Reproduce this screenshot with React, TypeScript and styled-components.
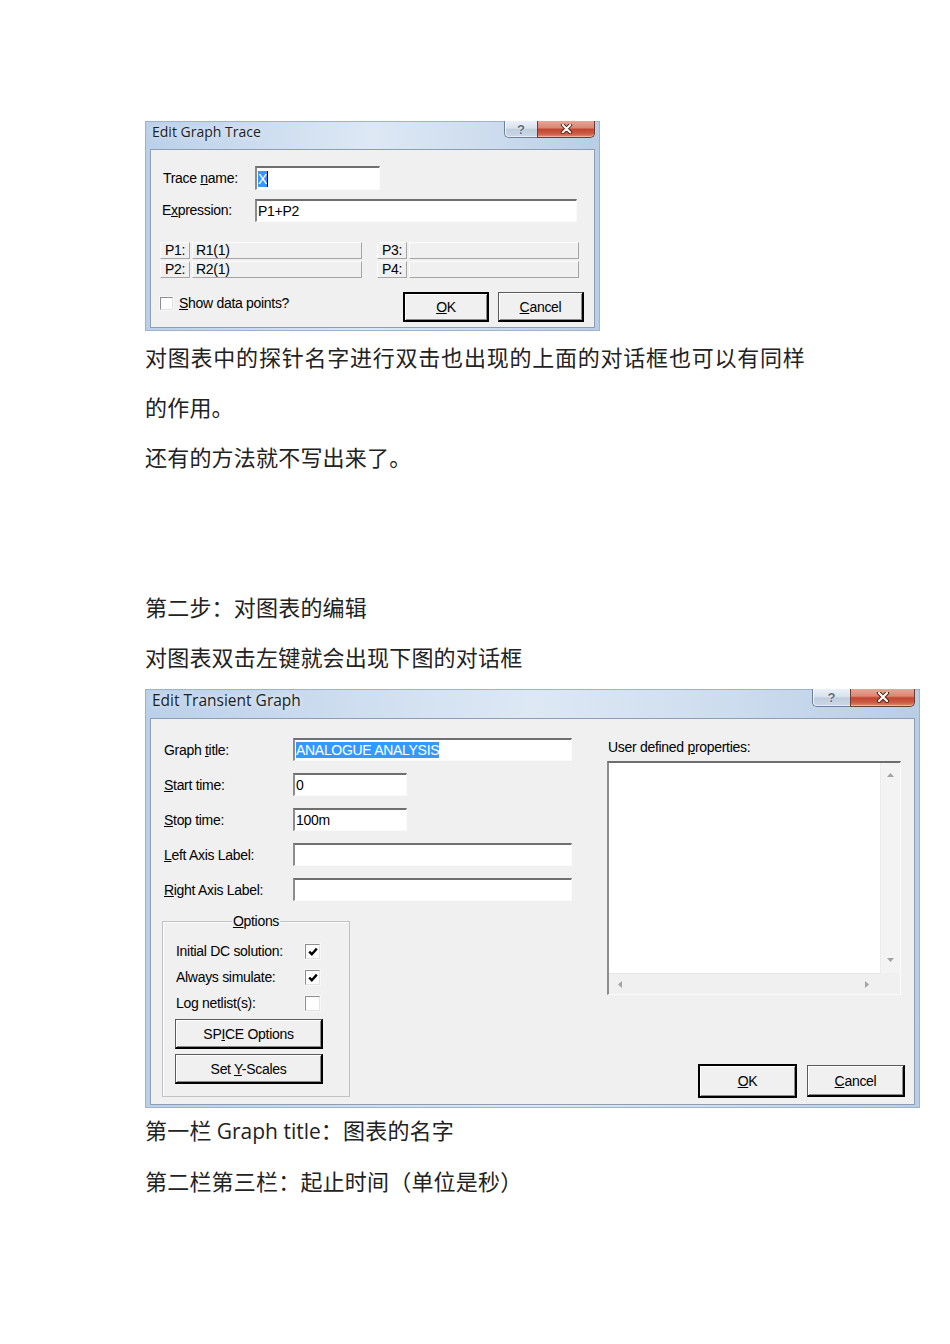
import * as React from 'react';
import styled, { createGlobalStyle } from 'styled-components';

const GlobalStyle = createGlobalStyle`
  html, body {
    margin: 0;
    padding: 0;
    background: #fff;
  }
  body {
    font-family: "Noto Sans CJK SC", sans-serif;
  }
`;

const Page = styled.div`
  width: 950px;
  box-sizing: border-box;
  padding: 121px 0 40px 145px;
`;

// ---------- window chrome ----------

const Window = styled.div<{ $w: number }>`
  width: ${p => p.$w}px;
  box-sizing: border-box;
  border: 1px solid #9db2cb;
  padding: 0 4px 2px 4px;
  background: linear-gradient(90deg, #bad0e9 0%, #cfdef0 28%, #dde8f4 50%, #cddcee 76%, #b8cde6 100%);
  font-family: "Liberation Sans", Arial, sans-serif;
  font-size: 14px;
  letter-spacing: -0.3px;
  color: #000;
`;

const TitleBar = styled.div<{ $h: number }>`
  height: ${p => p.$h}px;
  display: flex;
  justify-content: space-between;
  align-items: flex-start;
`;

const TitleText = styled.div<{ $size: number }>`
  font-family: "Open Sans", "Noto Sans", sans-serif;
  font-size: ${p => p.$size}px;
  letter-spacing: 0;
  line-height: 20px;
  color: #1b1f26;
  padding: 0 0 0 2px;
  text-shadow: 0 0 6px rgba(255, 255, 255, 0.9);
`;

const CaptionGroup = styled.div`
  display: flex;
  margin-top: -1px;
`;

const HelpButton = styled.div<{ $w: number; $h: number }>`
  width: ${p => p.$w}px;
  height: ${p => p.$h}px;
  box-sizing: border-box;
  border: 1px solid #6e8099;
  border-top: none;
  border-right: none;
  border-bottom-left-radius: 5px;
  background: linear-gradient(180deg, #eaf0f7 0%, #d8e2ed 45%, #bfcddd 52%, #cbd8e6 100%);
  box-shadow: inset 1px 0 0 rgba(255, 255, 255, 0.75), inset 0 -1px 0 rgba(255, 255, 255, 0.55);
  display: flex;
  align-items: center;
  justify-content: center;
  font-family: "Liberation Sans", Arial, sans-serif;
  font-weight: bold;
  font-size: 13px;
  letter-spacing: 0;
  color: #5b6b80;
  text-shadow: 0 0 1px #fff, 0 0 1px #fff;
`;

const CloseButton = styled.div<{ $w: number; $h: number }>`
  width: ${p => p.$w}px;
  height: ${p => p.$h}px;
  box-sizing: border-box;
  border: 1px solid #6f3b32;
  border-top: none;
  border-bottom-right-radius: 5px;
  background: linear-gradient(180deg, #e6a595 0%, #d98874 42%, #c3452f 52%, #cc5a43 78%, #df8d78 100%);
  box-shadow: inset 0 -1px 0 rgba(255, 220, 210, 0.5);
  display: flex;
  align-items: center;
  justify-content: center;
`;

const Client = styled.div<{ $pad: string }>`
  background: #f0f0f0;
  border: 1px solid #8f9db0;
  padding: ${p => p.$pad};
`;

// ---------- common controls ----------

const Mn = styled.span`
  text-decoration: underline;
  text-underline-offset: 1px;
  text-decoration-thickness: 1px;
`;

const FormRow = styled.div<{ $labelW: number; $h: number; $gap?: number }>`
  display: grid;
  grid-template-columns: ${p => p.$labelW}px auto;
  align-items: center;
  height: ${p => p.$h}px;
  margin-bottom: ${p => p.$gap ?? 0}px;
`;

const FieldLabel = styled.span<{ $indent: number }>`
  padding-left: ${p => p.$indent}px;
  white-space: nowrap;
`;

const TextBox = styled.div<{ $w: number; $h: number }>`
  width: ${p => p.$w}px;
  height: ${p => p.$h}px;
  box-sizing: border-box;
  background: #fff;
  border-style: solid;
  border-width: 2px 1px 1px 2px;
  border-color: #6f6f6f #fafafa #fafafa #8c8c8c;
  padding: 0 3px 0 1px;
  display: flex;
  align-items: center;
  white-space: nowrap;
`;

const Selected = styled.span<{ $caret?: boolean }>`
  background: #3399ff;
  color: #fff;
  line-height: 16px;
  border-right: ${p => (p.$caret ? '1px solid #000' : 'none')};
`;

const PushButton = styled.button<{ $w: number; $h: number; $default?: boolean }>`
  width: ${p => p.$w}px;
  height: ${p => p.$h}px;
  box-sizing: border-box;
  margin: 0;
  padding: 0;
  background: #f0f0f0;
  font-family: "Liberation Sans", Arial, sans-serif;
  font-size: 14px;
  letter-spacing: -0.3px;
  color: #000;
  border-style: solid;
  border-width: ${p => (p.$default ? '2px' : '1px 2px 2px 1px')};
  border-color: ${p => (p.$default ? '#000' : '#5a5a5a #000 #000 #5a5a5a')};
  box-shadow: inset 1px 1px 0 #fff, inset -1px -1px 0 #8a8a8a;
`;

const CheckBox = styled.span<{ $size: number }>`
  width: ${p => p.$size}px;
  height: ${p => p.$size}px;
  box-sizing: border-box;
  background: #fff;
  border: 1px solid;
  border-color: #8d8d8d #e2e2e2 #e2e2e2 #8d8d8d;
  box-shadow: 0 0 0 1px #f7f7f7;
  display: inline-flex;
  align-items: center;
  justify-content: center;
`;

const Tick = () => (
  <svg width="10" height="9" viewBox="0 0 10 9">
    <path d="M1.2 4.6 L3.8 7.2 L8.8 1.6" stroke="#000" strokeWidth="2.4" fill="none" />
  </svg>
);

const CloseGlyph = ({ w }: { w: number }) => (
  <svg width={w} height={w * 0.72} viewBox="0 0 14 10">
    <path d="M3 1 L11 9 M11 1 L3 9" stroke="#5a2116" strokeWidth="4.2" strokeLinecap="round" />
    <path d="M3 1 L11 9 M11 1 L3 9" stroke="#fff" strokeWidth="2.2" strokeLinecap="round" />
  </svg>
);

// ---------- dialog 1: Edit Graph Trace ----------

const TraceForm = styled.div`
  display: flex;
  flex-direction: column;
`;

const PGrid = styled.div`
  display: grid;
  grid-template-columns: 202px 202px;
  column-gap: 15px;
  row-gap: 2px;
  margin-top: 20px;
`;

const PPair = styled.div`
  display: grid;
  grid-template-columns: 30px 170px;
  column-gap: 2px;
  height: 17px;
`;

const PCell = styled.div<{ $center?: boolean }>`
  box-sizing: border-box;
  background: #f0f0f0;
  border: 1px solid;
  border-color: #fdfdfd #a5a5a5 #a5a5a5 #fdfdfd;
  line-height: 15px;
  padding-left: ${p => (p.$center ? 0 : 3)}px;
  text-align: ${p => (p.$center ? 'center' : 'left')};
  white-space: nowrap;
`;

const TraceFooter = styled.div`
  display: flex;
  justify-content: space-between;
  align-items: flex-start;
  margin-top: 14px;
`;

const ShowPoints = styled.label`
  display: flex;
  align-items: center;
  gap: 6px;
  margin-top: 5px;
  line-height: 13px;
`;

const ButtonRow = styled.div<{ $gap: number }>`
  display: flex;
  align-items: center;
  gap: ${p => p.$gap}px;
`;

const TraceDialog = () => (
  <Window $w={455}>
    <TitleBar $h={27}>
      <TitleText $size={14}>Edit Graph Trace</TitleText>
      <CaptionGroup>
        <HelpButton $w={33} $h={17}>?</HelpButton>
        <CloseButton $w={58} $h={17}><CloseGlyph w={13} /></CloseButton>
      </CaptionGroup>
    </TitleBar>
    <Client $pad="16px 10px 5px 9px">
      <TraceForm>
        <FormRow $labelW={95} $h={24} $gap={8}>
          <FieldLabel $indent={3}>Trace <Mn>n</Mn>ame:</FieldLabel>
          <TextBox $w={125} $h={24}><Selected $caret>X</Selected></TextBox>
        </FormRow>
        <FormRow $labelW={95} $h={24}>
          <FieldLabel $indent={2}>E<Mn>x</Mn>pression:</FieldLabel>
          <TextBox $w={322} $h={23}>P1+P2</TextBox>
        </FormRow>
        <PGrid>
          <PPair><PCell $center>P1:</PCell><PCell>R1(1)</PCell></PPair>
          <PPair><PCell $center>P3:</PCell><PCell /></PPair>
          <PPair><PCell $center>P2:</PCell><PCell>R2(1)</PCell></PPair>
          <PPair><PCell $center>P4:</PCell><PCell /></PPair>
        </PGrid>
        <TraceFooter>
          <ShowPoints>
            <CheckBox $size={13} />
            <span><Mn>S</Mn>how data points?</span>
          </ShowPoints>
          <ButtonRow $gap={9}>
            <PushButton $w={86} $h={30} $default><Mn>O</Mn>K</PushButton>
            <PushButton $w={86} $h={30}><Mn>C</Mn>ancel</PushButton>
          </ButtonRow>
        </TraceFooter>
      </TraceForm>
    </Client>
  </Window>
);

// ---------- dialog 2: Edit Transient Graph ----------

const GraphClient = styled.div`
  display: grid;
  grid-template-columns: 455px 1fr;
`;

const LeftCol = styled.div`
  padding: 19px 0 7px 0;
  display: flex;
  flex-direction: column;
`;

const GroupBox = styled.div`
  position: relative;
  width: 188px;
  box-sizing: border-box;
  margin: 8px 0 0 11px;
  border: 1px solid #c2c2c2;
  box-shadow: inset 1px 1px 0 #fbfbfb;
  padding: 19px 0 12px 12px;
`;

const GroupLegend = styled.span`
  position: absolute;
  top: -9px;
  left: 0;
  right: 0;
  margin: 0 auto;
  width: max-content;
  padding: 0 1px;
  background: #f0f0f0;
  line-height: 16px;
`;

const OptionRow = styled.div`
  display: grid;
  grid-template-columns: 129px 16px;
  align-items: center;
  height: 20px;
  margin-bottom: 6px;
  padding-left: 1px;
`;

const GroupButtons = styled.div`
  display: flex;
  flex-direction: column;
  gap: 5px;
  margin-top: 3px;
`;

const RightCol = styled.div`
  padding: 21px 9px 6px 1px;
  display: flex;
  flex-direction: column;
`;

const ListCaption = styled.div`
  padding-left: 1px;
  line-height: 14px;
  margin-bottom: 7px;
`;

const ListBox = styled.div`
  width: 294px;
  height: 234px;
  box-sizing: border-box;
  background: #fff;
  border-style: solid;
  border-width: 2px 1px 1px 2px;
  border-color: #6d6d6d #fbfbfb #fbfbfb #8d8d8d;
  display: grid;
  grid-template-columns: 1fr 20px;
  grid-template-rows: 1fr 21px;
`;

const ListArea = styled.div`
  background: #fff;
`;

const VScroll = styled.div`
  background: #f3f3f3;
  border-left: 1px solid #ececec;
  display: flex;
  flex-direction: column;
  justify-content: space-between;
  align-items: center;
  padding: 10px 0 11px;
`;

const HScroll = styled.div`
  background: #f0f0f0;
  border-top: 1px solid #e4e4e4;
  display: flex;
  justify-content: space-between;
  align-items: center;
  padding: 0 11px 0 9px;
`;

const ScrollCorner = styled.div`
  background: #f0f0f0;
`;

const BottomButtons = styled.div`
  margin-top: auto;
  display: flex;
  justify-content: flex-end;
  align-items: center;
  gap: 10px;
`;

const Arrow = ({ dir }: { dir: 'up' | 'down' | 'left' | 'right' }) => {
  const pts = {
    up: '0,4 3.5,0 7,4',
    down: '0,0 7,0 3.5,4',
    left: '4,0 4,7 0,3.5',
    right: '0,0 4,3.5 0,7',
  }[dir];
  const vertical = dir === 'up' || dir === 'down';
  return (
    <svg width={vertical ? 7 : 4} height={vertical ? 4 : 7} viewBox={vertical ? '0 0 7 4' : '0 0 4 7'}>
      <polygon points={pts} fill="#a3a3a3" />
    </svg>
  );
};

const graphFields: { label: React.ReactNode; w: number; value?: React.ReactNode }[] = [
  { label: <>Graph <Mn>t</Mn>itle:</>, w: 279, value: <Selected>ANALOGUE ANALYSIS</Selected> },
  { label: <><Mn>S</Mn>tart time:</>, w: 114, value: '0' },
  { label: <><Mn>S</Mn>top time:</>, w: 114, value: '100m' },
  { label: <><Mn>L</Mn>eft Axis Label:</>, w: 279 },
  { label: <><Mn>R</Mn>ight Axis Label:</>, w: 279 },
];

const options = [
  { label: 'Initial DC solution:', checked: true },
  { label: 'Always simulate:', checked: true },
  { label: 'Log netlist(s):', checked: false },
];

const GraphDialog = () => (
  <Window $w={775}>
    <TitleBar $h={28}>
      <TitleText $size={15.5}>Edit Transient Graph</TitleText>
      <CaptionGroup>
        <HelpButton $w={38} $h={18}>?</HelpButton>
        <CloseButton $w={65} $h={18}><CloseGlyph w={14} /></CloseButton>
      </CaptionGroup>
    </TitleBar>
    <Client $pad="0">
      <GraphClient>
        <LeftCol>
          {graphFields.map((f, i) => (
            <FormRow key={i} $labelW={142} $h={23} $gap={12}>
              <FieldLabel $indent={13}>{f.label}</FieldLabel>
              <TextBox $w={f.w} $h={23}>{f.value}</TextBox>
            </FormRow>
          ))}
          <GroupBox>
            <GroupLegend><Mn>O</Mn>ptions</GroupLegend>
            {options.map(o => (
              <OptionRow key={o.label}>
                <span>{o.label}</span>
                <CheckBox $size={15}>{o.checked && <Tick />}</CheckBox>
              </OptionRow>
            ))}
            <GroupButtons>
              <PushButton $w={148} $h={30}>SP<Mn>I</Mn>CE Options</PushButton>
              <PushButton $w={148} $h={30}>Set <Mn>Y</Mn>-Scales</PushButton>
            </GroupButtons>
          </GroupBox>
        </LeftCol>
        <RightCol>
          <ListCaption>User defined <Mn>p</Mn>roperties:</ListCaption>
          <ListBox>
            <ListArea />
            <VScroll><Arrow dir="up" /><Arrow dir="down" /></VScroll>
            <HScroll><Arrow dir="left" /><Arrow dir="right" /></HScroll>
            <ScrollCorner />
          </ListBox>
          <BottomButtons>
            <PushButton $w={99} $h={34} $default><Mn>O</Mn>K</PushButton>
            <PushButton $w={98} $h={32}><Mn>C</Mn>ancel</PushButton>
          </BottomButtons>
        </RightCol>
      </GraphClient>
    </Client>
  </Window>
);

// ---------- document text ----------

const Para = styled.div<{ $top?: number }>`
  width: 660px;
  margin-top: ${p => p.$top ?? 0}px;
  font-family: "Noto Sans CJK SC", sans-serif;
  font-size: 22px;
  letter-spacing: 0.2px;
  line-height: 50px;
  text-align: justify;
  color: #222;
`;

const Latin = styled.span`
  font-family: "Open Sans", "Noto Sans", sans-serif;
  font-size: 21px;
  letter-spacing: 0;
`;

const BlankLines = styled.div<{ $h: number }>`
  height: ${p => p.$h}px;
`;

export default function App() {
  return (
    <>
      <GlobalStyle />
      <Page lang="zh-CN">
        <TraceDialog />
        <Para>对图表中的探针名字进行双击也出现的上面的对话框也可以有同样的作用。</Para>
        <Para>还有的方法就不写出来了。</Para>
        <BlankLines $h={100} />
        <Para>第二步：对图表的编辑</Para>
        <Para>对图表双击左键就会出现下图的对话框</Para>
        <BlankLines $h={8} />
        <GraphDialog />
        <Para $top={-4}>第一栏 <Latin>Graph title</Latin>：图表的名字</Para>
        <Para $top={-1}>第二栏第三栏：起止时间（单位是秒）</Para>
      </Page>
    </>
  );
}
